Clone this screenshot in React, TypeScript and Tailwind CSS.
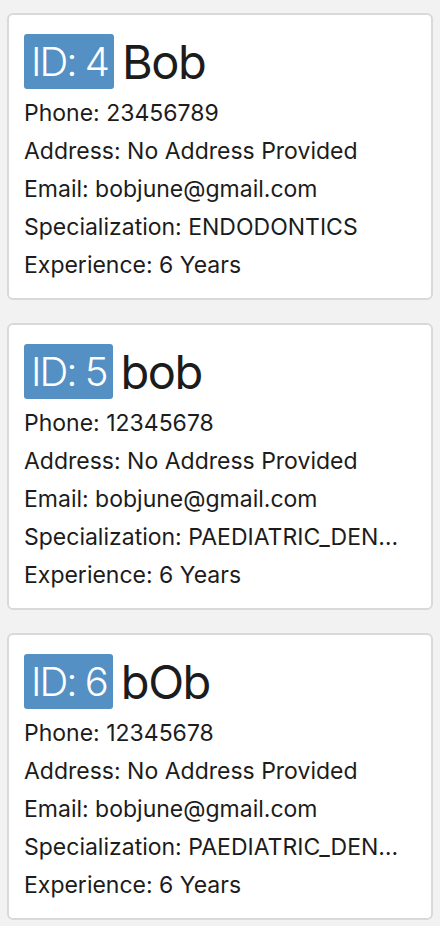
const doctors = [
  { id: 4, name: "Bob", phone: "23456789", spec: "ENDODONTICS" },
  { id: 5, name: "bob", phone: "12345678", spec: "PAEDIATRIC_DENTISTRY" },
  { id: 6, name: "bOb", phone: "12345678", spec: "PAEDIATRIC_DENTISTRY" },
];

function DoctorCard({ d }: { d: (typeof doctors)[number] }) {
  return (
    <div className="h-[287px] rounded-md border-2 border-[#d9d9d9] bg-white pl-[15px] pr-6 pt-[19px]">
      <div className="flex items-center gap-[8px]">
        <span className="flex h-[55px] items-center rounded-[3px] bg-[#5590c4] pl-[7px] pr-[6px] text-[40px] font-light leading-none tracking-[-2px] text-white">
          ID: {d.id}
        </span>
        <span className="text-[47px] leading-none tracking-[-1.5px] text-[#1c1c1c]">{d.name}</span>
      </div>
      <div className="mt-[5px] flex flex-col text-[23px] leading-[38px] text-[#1c1c1c]">
        <p className="truncate">Phone: {d.phone}</p>
        <p className="truncate">Address: No Address Provided</p>
        <p className="truncate">Email: bobjune@gmail.com</p>
        <p className="truncate">Specialization: {d.spec}</p>
        <p className="truncate">Experience: 6 Years</p>
      </div>
    </div>
  );
}

export default function App() {
  return (
    <div
      className="flex min-h-[926px] flex-col gap-[23px] bg-[#f2f2f2] px-[7px] pt-[13px]"
      style={{ fontFamily: "Inter, 'Noto Sans', sans-serif" }}
    >
      {doctors.map((d) => (
        <DoctorCard key={d.id} d={d} />
      ))}
    </div>
  );
}
